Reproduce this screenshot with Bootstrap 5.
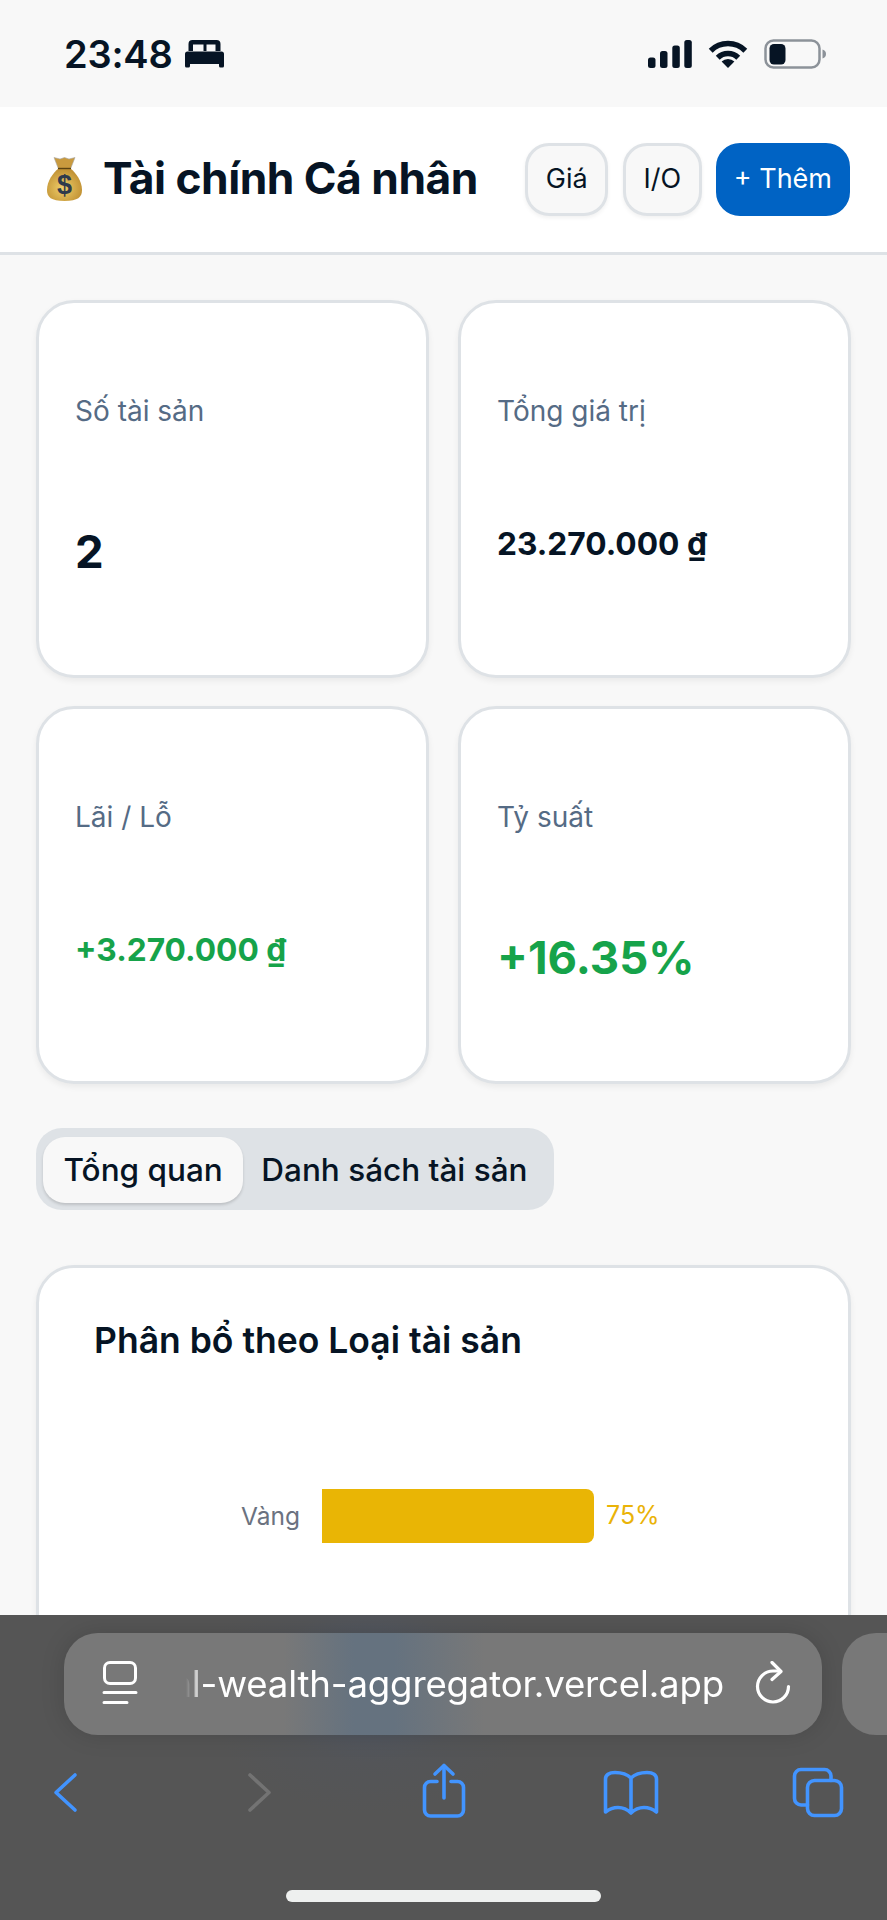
<!doctype html>
<html lang="vi">
<head>
<meta charset="utf-8">
<meta name="viewport" content="width=device-width, initial-scale=1">
<title>Tài chính Cá nhân</title>
<link href="https://cdn.jsdelivr.net/npm/bootstrap@5.3.0/dist/css/bootstrap.min.css" rel="stylesheet">
<style>
html,body{height:1920px;overflow:hidden}
body{background:#f8f8f8;font-family:Inter,"Liberation Sans",sans-serif;color:#061424}
.status-strip{height:107px;padding:0 60px 0 64px}
.clock{font-size:38px;font-weight:600;line-height:1;letter-spacing:-.2px}
.bed-icon{margin-left:12px}
.app-head{height:148px;background:#fff;border-bottom:3px solid #dee2e6;padding:0 37px 0 47px}
.app-title{font-size:44.300px;font-weight:700;letter-spacing:-.5px;margin:0 0 2px 21px;line-height:1}
.head-btn{font-size:27px;height:73px;border-radius:24px;padding:0 17.500px;background:#f8f8f8;border:3px solid #dee2e6;color:#061424;box-shadow:0 2px 4px rgba(0,0,0,.06)}
.head-add{background:#0063c4;border-color:#0063c4;color:#fff;padding:0 15px;box-shadow:none}
.head-gap{margin-left:15px}
.head-gap-tight{margin-left:14px}
.page-wrap{padding:45px 36px 0}
.stat-row{--bs-gutter-x:29px;--bs-gutter-y:28px}
.panel{border:3px solid #dee2e6;border-radius:38px;box-shadow:0 3px 6px rgba(0,0,0,.06)}
.stat-panel{height:378px;padding:88px 36px 0}
.stat-label{font-size:28px;line-height:40px;color:#556b85;margin-bottom:88px}
.stat-big{font-size:45.500px;font-weight:700;line-height:66px}
.stat-mid{font-size:31.700px;font-weight:700;line-height:49px}
.gain{color:#16a34a}
.tab-strip{display:inline-flex;background:#dee2e6;border-radius:26px;padding:9px 7px;margin-top:44px;height:82px}
.tab-strip .nav-link{font-size:31.500px;line-height:66px;padding:0 20.500px;color:#061424;border-radius:22px;height:66px;font-weight:500}
.tab-strip .nav-link.active{background:#f8f8f8;color:#061424;box-shadow:0 2px 3px rgba(0,0,0,.15)}
.tab-strip .tab-next{padding:0 20px 0 18px}
.chart-panel{margin-top:55px;height:700px;padding:48px 55px}
.chart-title{font-size:35.500px;font-weight:600;line-height:50px;margin:0}
.chart-row{margin-top:123px;margin-left:147px}
.chart-name{font-size:24.500px;color:#6b7280;width:60px;white-space:nowrap}
.chart-bar{height:54px;background:#e9b505;border-radius:0 8px 8px 0;margin:0 12px 0 21px}
.chart-val{font-size:25px;color:#eab308}
.browser-dock{position:fixed;left:0;right:0;bottom:0;height:305px;padding-top:18px;overflow:hidden;
  background:radial-gradient(ellipse 170px 130px at 370px 70px,rgba(75,90,115,.65),rgba(80,85,95,.3) 60%,rgba(85,85,85,0) 100%),#555}
.pill-row{padding-left:64px;gap:20px;width:1100px}
.url-pill{width:758px;height:102px;border-radius:34px;flex:none;color:#fff;box-shadow:0 0 24px rgba(0,0,0,.14);
  background:linear-gradient(90deg,#787878 0,#787878 220px,#65727f 290px,#65727f 330px,#787878 420px,#787878 100%)}
.next-pill{width:200px;height:102px;border-radius:34px;background:#787878;flex:none}
.url-clip{width:552px;margin-left:30px;white-space:nowrap;font-size:36.600px;line-height:50px;letter-spacing:-.15px;
  -webkit-mask-image:linear-gradient(90deg,transparent 14px,#000 30px);mask-image:linear-gradient(90deg,transparent 14px,#000 30px)}
.reading{margin-left:36px;flex:none}
.reload{margin-left:30px;flex:none}
.tool-row{margin-top:27px;height:60px;padding-left:50px}
.tool-row svg{display:block;flex:none}
.t2{margin-left:165px}.t3{margin-left:145px}.t4{margin-left:132px}.t5{margin-left:128px}
.home-bar{width:315px;height:12px;border-radius:6px;background:#eef0ef;margin:68px 0 0 286px}
.sig-gap{margin-left:15px}
</style>
</head>
<body>
<div class="status-strip d-flex align-items-center justify-content-between">
  <div class="d-flex align-items-center">
    <span class="clock">23:48</span>
    <svg class="bed-icon" width="40" height="28" viewBox="0 0 40 28" fill="#061424"><path d="M3.500 11V4a4 4 0 0 1 4-4h24a4 4 0 0 1 4 4v7h-5V4.500h-9V11h-3V4.500H8V11z"/><path d="M2.500 11.500h34a2.500 2.500 0 0 1 2.500 2.500v12a1.500 1.500 0 0 1-1.500 1.500h-2a1.500 1.500 0 0 1-1.500-1.500v-2H5v2a1.500 1.500 0 0 1-1.500 1.500h-2A1.500 1.500 0 0 1 0 26V14a2.500 2.500 0 0 1 2.500-2.500z"/></svg>
  </div>
  <div class="d-flex align-items-center">
    <svg width="44" height="28" viewBox="0 0 44 28" fill="#061424"><rect x="0" y="17.500" width="7.500" height="10.500" rx="2.500"/><rect x="12" y="11" width="7.500" height="17" rx="2.500"/><rect x="24.300" y="5.500" width="7.500" height="22.500" rx="2.500"/><rect x="36.300" y="0" width="7.500" height="28" rx="2.500"/></svg>
    <svg class="sig-gap" width="42" height="30" viewBox="0 0 42 30"><g fill="none" stroke="#061424" stroke-width="5.500"><path d="M3.700 11.700A24.500 24.500 0 0 1 38.300 11.700"/><path d="M10.750 18.750A14.500 14.500 0 0 1 31.250 18.750"/></g><path d="M21 29 14.600 22.600A9 9 0 0 1 27.400 22.600z" fill="#061424"/></svg>
    <svg class="sig-gap" width="63" height="30" viewBox="0 0 63 30"><rect x="1.500" y="1.500" width="54" height="27" rx="8" fill="none" stroke="#8c9299" stroke-width="2.500"/><rect x="5.500" y="5" width="16" height="20.500" rx="4.500" fill="#061424"/><path d="M58.500 10.500c2.500.8 3.500 2.500 3.500 4.500s-1 3.700-3.500 4.500z" fill="#8c9299"/></svg>
  </div>
</div>

<header class="app-head d-flex align-items-center justify-content-between">
  <div class="d-flex align-items-center">
    <svg width="35" height="46" viewBox="0 0 35 46">
      <defs><radialGradient id="bagfill" cx=".45" cy=".6" r=".6"><stop offset="0" stop-color="#f0cf6a"/><stop offset="1" stop-color="#bf8f32"/></radialGradient></defs>
      <path d="M7 1.500 13 3l4.500-1.500L22 3l6-1.500-4.500 11.500h-12z" fill="#c99a3e" stroke="#a8a8a8" stroke-width=".6"/>
      <path d="M11.500 12.500h12C29 17 35 25 35 34c0 7-4 11-17.500 11S0 41 0 34c0-9 6-17 11.500-21.500z" fill="url(#bagfill)"/>
      <path d="M11 12.500h13" stroke="#5b4312" stroke-width="1.400"/>
      <text x="17.500" y="38" text-anchor="middle" font-family="Liberation Sans,sans-serif" font-size="27" font-weight="700" fill="#2f3a4c">$</text>
    </svg>
    <h1 class="app-title">Tài chính Cá nhân</h1>
  </div>
  <div class="d-flex align-items-center">
    <button type="button" class="btn head-btn">Giá</button>
    <button type="button" class="btn head-btn head-gap">I/O</button>
    <button type="button" class="btn head-btn head-add head-gap-tight">+ Thêm</button>
  </div>
</header>

<main class="page-wrap">
  <div class="row stat-row">
    <div class="col-6"><div class="card panel stat-panel"><div class="stat-label">Số tài sản</div><div class="stat-big">2</div></div></div>
    <div class="col-6"><div class="card panel stat-panel"><div class="stat-label">Tổng giá trị</div><div class="stat-mid">23.270.000 ₫</div></div></div>
    <div class="col-6"><div class="card panel stat-panel"><div class="stat-label">Lãi / Lỗ</div><div class="stat-mid gain">+3.270.000 ₫</div></div></div>
    <div class="col-6"><div class="card panel stat-panel"><div class="stat-label">Tỷ suất</div><div class="stat-big gain">+16.35%</div></div></div>
  </div>

  <ul class="nav tab-strip">
    <li class="nav-item"><a class="nav-link active" href="#">Tổng quan</a></li>
    <li class="nav-item"><a class="nav-link tab-next" href="#">Danh sách tài sản</a></li>
  </ul>

  <section class="card panel chart-panel">
    <h2 class="chart-title">Phân bổ theo Loại tài sản</h2>
    <div class="chart-row d-flex align-items-center">
      <span class="chart-name">Vàng</span>
      <div class="chart-bar" style="width:272px"></div>
      <span class="chart-val">75%</span>
    </div>
  </section>
</main>

<div class="browser-dock">
  <div class="pill-row d-flex">
    <div class="url-pill d-flex align-items-center">
      <svg class="reading" width="42" height="50" viewBox="0 0 42 50" fill="none" stroke="#fff" stroke-width="3" stroke-linecap="round"><rect x="4.500" y="3.500" width="31" height="21" rx="5.500"/><path d="M4 33.500h32M4 43.500h23"/></svg>
      <div class="url-clip d-flex justify-content-end"><span>al-wealth-aggregator.vercel.app</span></div>
      <svg class="reload" width="40" height="46" viewBox="0 0 40 46" fill="none" stroke="#fff" stroke-width="3.200" stroke-linecap="round" stroke-linejoin="round"><path d="M34.500 25.500A15.500 15.500 0 1 1 19 10h6"/><path d="M18 1.500 27 10.500l-9 8"/></svg>
    </div>
    <div class="next-pill"></div>
  </div>
  <div class="tool-row d-flex">
    <svg width="30" height="60" viewBox="0 0 30 60" fill="none" stroke="#4294ff" stroke-width="3.600" stroke-linecap="round" stroke-linejoin="round"><path d="M25 13 6 30.500 25 48"/></svg>
    <svg class="t2" width="30" height="60" viewBox="0 0 30 60" fill="none" stroke="#737373" stroke-width="3.600" stroke-linecap="round" stroke-linejoin="round"><path d="M5 13 24 30.500 5 48"/></svg>
    <svg class="t3" width="48" height="60" viewBox="0 0 48 60" fill="none" stroke="#4294ff" stroke-width="3.600" stroke-linecap="round" stroke-linejoin="round"><path d="M17 19.500h-6.500a6 6 0 0 0-6 6V48a6 6 0 0 0 6 6h27a6 6 0 0 0 6-6V25.500a6 6 0 0 0-6-6H31"/><path d="M24 4v32"/><path d="M15 12 24 3.500 33 12"/></svg>
    <svg class="t4" width="62" height="60" viewBox="0 0 62 60" fill="none" stroke="#4294ff" stroke-width="3.600" stroke-linecap="round" stroke-linejoin="round"><path d="M31 16C27 12 21 10.500 15 10.500 9 10.500 5.500 13 5.500 17V50C10 46.500 14 45.500 18 45.500 23 45.500 28 48 31 51 34 48 39 45.500 44 45.500 48 45.500 52 46.500 56.500 50V17C56.500 13 53 10.500 47 10.500 41 10.500 35 12 31 16V51"/></svg>
    <svg class="t5" width="56" height="60" viewBox="0 0 56 60" fill="none" stroke="#4294ff" stroke-width="3.600" stroke-linecap="round" stroke-linejoin="round"><path d="M41 18.500V14A6.500 6.500 0 0 0 34.500 7.500H11A6.500 6.500 0 0 0 4.500 14V36.500A6.500 6.500 0 0 0 11 43H17.500"/><rect x="17.500" y="18.500" width="34" height="35" rx="7"/></svg>
  </div>
  <div class="home-bar"></div>
</div>
<script src="https://cdn.jsdelivr.net/npm/bootstrap@5.3.0/dist/js/bootstrap.bundle.min.js"></script>
</body>
</html>
